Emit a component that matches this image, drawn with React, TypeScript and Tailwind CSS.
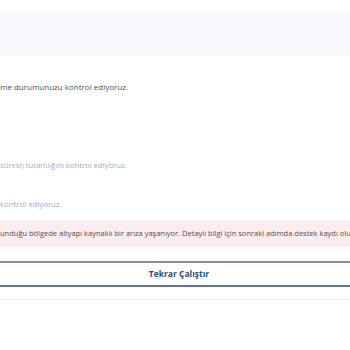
export default function App() {
  return (
    <div className="h-[350px] w-[350px] overflow-hidden bg-white font-['Open_Sans',sans-serif]">
      <div className="h-[13px]" />
      <div className="h-[43px] bg-[#f7f8fb]" />

      <div className="mt-[26px] whitespace-nowrap text-[8px] leading-[10px] text-[#4b4f58]">
        me durumunuzu kontrol ediyoruz.
      </div>

      <div className="mt-[68px] whitespace-nowrap text-[7.7px] leading-[10px] text-[#a3aaba]">
        süresi) tutarlılığını kontrol ediyoruz.
      </div>

      <div className="mt-[29px] whitespace-nowrap text-[7.8px] leading-[10px] text-[#a3aaba]">
        kontrol ediyoruz.
      </div>

      <div className="mt-[11px] flex h-[27px] items-center overflow-hidden whitespace-nowrap bg-[#fbeced] text-[7.5px] text-[#5a4a50]">
        unduğu bölgede altyapı kaynaklı bir arıza yaşanıyor. Detaylı bilgi için sonraki adımda destek kaydı oluşturabilirsiniz.
      </div>

      <div className="mt-[14px] flex h-[26px] items-center justify-center border-y-2 border-t-[#7f90a6] border-b-[#5f7592] pl-[8px] text-[8.5px] font-bold text-[#2f4b72]">
        Tekrar Çalıştır
      </div>

      <div className="mt-[12px] h-px bg-[#eceef3]" />
    </div>
  );
}
